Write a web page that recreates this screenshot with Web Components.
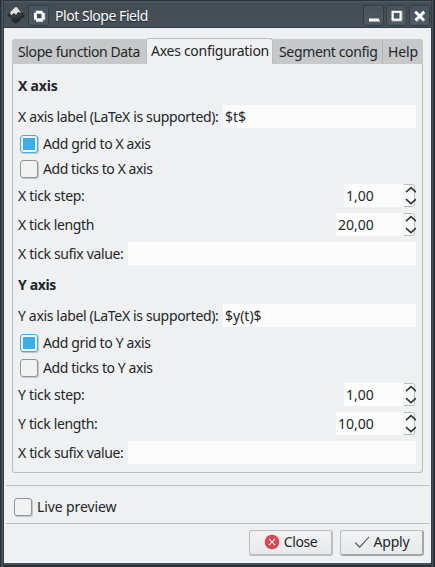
<!DOCTYPE html>
<html lang="en">
<head>
<meta charset="utf-8">
<title>Plot Slope Field</title>
<style>
html,body{margin:0;height:100%;overflow:hidden}
body{font:14px/20px "Noto Sans",sans-serif;color:#232629;background:#2b3035}
</style>
</head>
<body>
<dialog-window caption="Plot Slope Field">
  <tab-panel>
    <tab-item slot="tab" style="width:134px" measure="122">Slope function Data</tab-item>
    <tab-item slot="tab" style="width:127px" measure="118" active>Axes configuration</tab-item>
    <tab-item slot="tab" style="width:110px" measure="98.5">Segment config</tab-item>
    <tab-item slot="tab" style="width:40px" measure="30">Help</tab-item>
    <axis-section measure="39.5">
      <span slot="heading">X axis</span>
      <text-row label="X axis label (LaTeX is supported):" measure="200.5" value="$t$" lead="205"></text-row>
      <check-row label="Add grid to X axis" measure="107.5" checked></check-row>
      <check-row label="Add ticks to X axis" measure="109.5"></check-row>
      <spin-row label="X tick step:" measure="66.5" value="1,00" size="72"></spin-row>
      <spin-row label="X tick length" measure="76" value="20,00" size="80"></spin-row>
      <text-row label="X tick sufix value:" measure="105.5" lead="110"></text-row>
    </axis-section>
    <axis-section measure="38">
      <span slot="heading">Y axis</span>
      <text-row label="Y axis label (LaTeX is supported):" measure="200.5" value="$y(t)$" lead="205"></text-row>
      <check-row label="Add grid to Y axis" measure="107.5" checked></check-row>
      <check-row label="Add ticks to Y axis" measure="109.5"></check-row>
      <spin-row label="Y tick step:" measure="66.5" value="1,00" size="72"></spin-row>
      <spin-row label="Y tick length:" measure="79.5" value="10,00" size="80"></spin-row>
      <text-row label="X tick sufix value:" measure="105.5" lead="110"></text-row>
    </axis-section>
  </tab-panel>
  <preview-bar><check-row label="Live preview" measure="79.5"></check-row></preview-bar>
  <action-bar>
    <push-button measure="33.5">
      <svg slot="icon" width="16" height="16" viewBox="0 0 16 16"><circle cx="8" cy="8" r="7.3" fill="#da4453"/><path d="M4.9 4.9l6.2 6.2M11.1 4.9l-6.2 6.2" stroke="#fcfcfc" stroke-width="1.1"/></svg>Close</push-button>
    <push-button strong measure="36">
      <svg slot="icon" width="16" height="16" viewBox="0 0 16 16"><path d="M1.2 8.6l4.5 4.5L15 3" fill="none" stroke="#4d5154" stroke-width="1.1"/></svg>Apply</push-button>
  </action-bar>
</dialog-window>
<script>
// Tightens the tracking of a label so that it takes the width named by the host's measure attribute.
function fit(host, box) {
  const target = parseFloat(host.getAttribute('measure'));
  if (!target) return;
  const nodes = box.localName === 'slot' ? box.assignedNodes() : [...box.childNodes];
  const text = nodes.map(n => n.textContent).join('').trim();
  const probe = document.createElement('span');
  probe.style.cssText = 'position:absolute;visibility:hidden;white-space:nowrap;letter-spacing:0;font:' + getComputedStyle(box).font;
  probe.textContent = text;
  document.body.append(probe);
  const width = probe.getBoundingClientRect().width;
  probe.remove();
  host.style.setProperty('--track', (target - width) / text.length + 'px');
}

function define(name, html, setup) {
  customElements.define(name, class extends HTMLElement {
    constructor() {
      super();
      const t = document.createElement('template');
      t.innerHTML = html;
      this.attachShadow({mode: 'open'}).append(t.content.cloneNode(true));
    }
    connectedCallback() { if (setup) setup(this, s => this.shadowRoot.querySelector(s)); }
  });
}

define('title-button', `<style>
:host{display:block;flex:none;box-sizing:border-box;width:21px;height:21px;border:1px solid #353d43;border-radius:3px;background:linear-gradient(#46515a,#505b62);box-shadow:inset 0 0 0 1px #4d5961}
::slotted(svg){display:block;width:19px;height:19px}
</style><slot></slot>`);

define('dialog-window', `<style>
:host{display:grid;box-sizing:border-box;width:435px;height:567px;grid-template-rows:28px 1fr;padding:0 4px 4px;border-radius:2px;background:linear-gradient(90deg,#2c3237 0 1px,#3a4248 1px 2px,#4b565e 2px 3px,#353d43 3px 4px,transparent 4px 431px,#343d45 431px 432px,#465059 432px 433px,#323a40 433px 434px,#25292c 434px),linear-gradient(#343c42 0 563px,#465059 563px 565px,#2b3035 565px)}
header{display:flex;align-items:center;background:linear-gradient(#2d3338 0 1px,#50585f 1px 2px,#424b52 3px,#485158 27px,#343b40 27px);padding:2px 1px 0 3px;box-sizing:border-box}
.logo{flex:none;width:18px;height:18px;margin-right:3px}
h1{flex:1;font:inherit;font-size:14px;color:#fcfcfc;margin:2px 0 0 6px;text-shadow:0 1px 1px #202529;letter-spacing:-.46px}
title-button+title-button{margin-left:2px}
main{display:flex;flex-direction:column;background:#eff0f1;padding:10px 2px 0;min-height:0}
</style>
<header>
 <svg class="logo" viewBox="0 0 18 18"><path d="M0 9.5L8 1Q9 0 10 1L18 9.5Q18 11.5 14 12.5L13.5 14.5L9 18L4 14.5L5 13Z" fill="#272b2e"/><path d="M3 6.5L8 1.3Q9 .5 10 1.3L14.5 7L11 6L9 9L7 7L4 9.5Z" fill="#dfe0e1"/><path d="M1 9.8L4 9.8L7 8L9 10L11 7L16 8.8L12 11.5L5 12.5Z" fill="#383c3f"/></svg>
 <title-button><svg viewBox="0 0 19 19"><path d="M7 5.3h7.2v2h2v6.7h-2v2H7v-2H5V7.3h2z" fill="#b5b9bb"/><path d="M6.8 4.8h6.4v2h2.3v6.4h-2v2H7.1v-2H5V6.8h1.8z" fill="#fff"/><rect x="8" y="7.8" width="4.5" height="4.5" fill="#414a50"/></svg></title-button>
 <h1></h1>
 <title-button><svg viewBox="0 0 19 19"><rect x="5" y="14" width="11" height="2" fill="#aaaead"/><rect x="5" y="12.5" width="10" height="2.5" fill="#fff"/></svg></title-button>
 <title-button><svg viewBox="0 0 19 19"><rect x="6" y="6" width="8.5" height="8.5" fill="none" stroke="#a8acaf" stroke-width="2"/><rect x="5.5" y="5.8" width="8" height="7.8" fill="none" stroke="#fff" stroke-width="2"/></svg></title-button>
 <title-button><svg viewBox="0 0 19 19"><path d="M5.7 6.2l8.6 8.6M14.4 6.2l-8.6 8.6" stroke="#a8acaf" stroke-width="3.2"/><path d="M5.2 5.6l8.6 8.6M14 5.6l-8.6 8.6" stroke="#fff" stroke-width="2.5"/></svg></title-button>
</header><main><slot></slot></main>`,
(el, $) => { $('h1').textContent = el.getAttribute('caption'); });

define('tab-item', `<style>
:host{display:flex;box-sizing:border-box;height:25px;margin-top:1px;padding-left:6px;align-items:center;background:#c6c8c9;border-right:1px solid #b3b5b6;white-space:nowrap;letter-spacing:var(--track)}
:host(:first-of-type){border-radius:3px 0 0 0;border-right:0}
:host(:last-of-type){border-radius:0 3px 0 0;border-right:0;padding-left:5px}
:host([active]){height:26px;margin-top:0;background:#eff0f1;border:1px solid #bcbec0;border-bottom:0;border-radius:3px 3px 0 0;padding:0 0 1px 4px}
</style><slot></slot>`, (el, $) => fit(el, $('slot')));

define('tab-panel', `<style>
:host{display:block;padding:0 6px}
nav{display:flex;height:25px}
section{box-sizing:border-box;height:410px;border:1px solid #bcbec0;border-top:0;border-radius:0 3px 3px 3px;padding:6px 6px 0 5px}
</style><nav><slot name="tab"></slot></nav><section><slot></slot></section>`);

define('axis-section', `<style>
:host{display:block}
h2{margin:0;height:33px;font:inherit;font-weight:700;display:flex;align-items:center;letter-spacing:var(--track)}
</style><h2><slot name="heading"></slot></h2><slot></slot>`, (el, $) => fit(el, $('slot')));

define('text-row', `<style>
:host{display:flex;height:29px;align-items:center;white-space:nowrap}
label{box-sizing:border-box;padding-top:1px;letter-spacing:var(--track)}
span{flex:1;height:23px;box-sizing:border-box;background:#fcfcfc;padding:2px 2px 0}
</style><label></label><span></span>`,
(el, $) => {
  $('label').textContent = el.getAttribute('label');
  $('label').style.width = el.getAttribute('lead') + 'px';
  $('span').textContent = el.getAttribute('value') || '';
  fit(el, $('label'));
});

define('check-row', `<style>
:host{display:flex;height:25px;align-items:center;gap:5px;padding-left:2px;box-sizing:border-box;white-space:nowrap}
i{box-sizing:border-box;width:18px;height:18px;border:1px solid #929496;border-radius:3px;background:#f1f2f2;box-shadow:1px 1px 0 #c3c5c6;margin-top:1px;padding:2px}
:host([checked]) i{border-color:#3daee9}
:host([checked]) i::before{content:"";display:block;width:12px;height:12px;background:#3daee9}
label{letter-spacing:var(--track)}
</style><i></i><label></label>`,
(el, $) => { $('label').textContent = el.getAttribute('label'); fit(el, $('label')); });

define('spin-row', `<style>
:host{display:flex;height:29px;align-items:center;justify-content:space-between;white-space:nowrap}
label{padding-top:1px;letter-spacing:var(--track)}
div{display:flex;height:23px;justify-content:space-between;background:#fcfcfc;padding-left:2px;box-sizing:border-box}
span{padding-top:2px}
svg{display:block}
</style><label></label><div><span></span>
<svg width="13" height="23" viewBox="0 0 13 23"><rect width="13" height="23" fill="#eff0f1"/><path d="M1 .5h8.5a2 2 0 0 1 2 2v18a2 2 0 0 1-2 2H1" fill="#f7f8f8" stroke="#b9bbbd"/><path d="M3 8.2L8 3.7l5 4.5M3 15.2l5 4.4 5-4.4" fill="none" stroke="#34383b" stroke-width="1.7"/></svg></div>`,
(el, $) => {
  $('label').textContent = el.getAttribute('label');
  $('span').textContent = el.getAttribute('value');
  $('div').style.width = el.getAttribute('size') + 'px';
  fit(el, $('label'));
});

define('preview-bar', `<style>
:host{display:flex;box-sizing:border-box;height:39px;margin-top:12px;border:solid #bcbec0;border-width:1px 0;padding:8px 6px 0}
</style><slot></slot>`);

define('action-bar', `<style>
:host{display:flex;justify-content:flex-end;gap:7px;padding:6px 5px 0 0}
</style><slot></slot>`);

define('push-button', `<style>
:host{display:flex;box-sizing:border-box;width:84px;height:26px;border:1px solid #bcbec0;border-right-width:2px;border-bottom-width:2px;border-radius:3px;align-items:center;justify-content:center;gap:4px;background:linear-gradient(#f1f2f2,#e8e9ea);padding-bottom:1px}
:host([strong]){border-right-color:#a5a8aa;border-bottom-color:#a5a8aa}
::slotted(svg){display:block}
span{letter-spacing:var(--track)}
</style><slot name="icon"></slot><span><slot></slot></span>`, (el, $) => fit(el, $('span slot')));
</script>
</body>
</html>
